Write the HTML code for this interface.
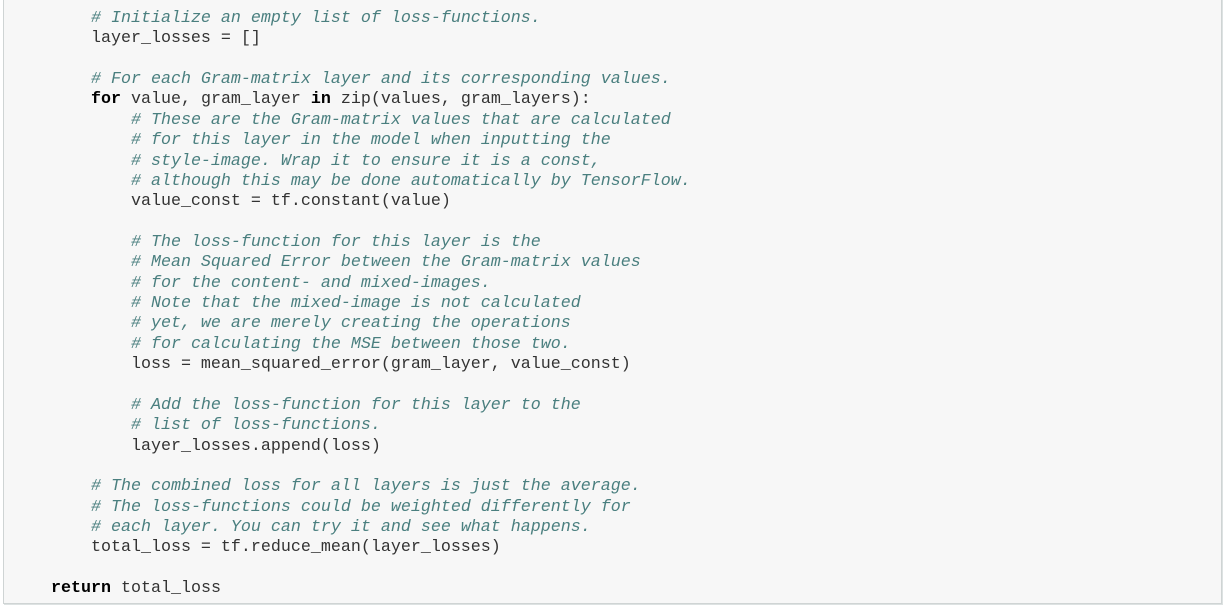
<!DOCTYPE html>
<html><head><meta charset="utf-8"><style>
html,body{margin:0;padding:0;background:#fff;width:1226px;height:611px;overflow:hidden}
.box{position:absolute;left:3px;top:-2px;width:1217px;height:605px;background:#f7f7f7;border:1px solid #cfd4d4;border-top:none;box-shadow:1px 1px 0 #dde2e2}
pre{position:absolute;left:51px;top:9px;margin:0;font-family:"Liberation Mono",monospace;font-size:16.67px;line-height:20.36px;color:#333}
.c{color:#4a7f7f;font-style:italic}
.k{color:#000;font-weight:bold}
</style></head><body>
<div class="box"></div>
<pre>    <span class="c"># Initialize an empty list of loss-functions.</span>
    layer_losses = []

    <span class="c"># For each Gram-matrix layer and its corresponding values.</span>
    <span class="k">for</span> value, gram_layer <span class="k">in</span> zip(values, gram_layers):
        <span class="c"># These are the Gram-matrix values that are calculated</span>
        <span class="c"># for this layer in the model when inputting the</span>
        <span class="c"># style-image. Wrap it to ensure it is a const,</span>
        <span class="c"># although this may be done automatically by TensorFlow.</span>
        value_const = tf.constant(value)

        <span class="c"># The loss-function for this layer is the</span>
        <span class="c"># Mean Squared Error between the Gram-matrix values</span>
        <span class="c"># for the content- and mixed-images.</span>
        <span class="c"># Note that the mixed-image is not calculated</span>
        <span class="c"># yet, we are merely creating the operations</span>
        <span class="c"># for calculating the MSE between those two.</span>
        loss = mean_squared_error(gram_layer, value_const)

        <span class="c"># Add the loss-function for this layer to the</span>
        <span class="c"># list of loss-functions.</span>
        layer_losses.append(loss)

    <span class="c"># The combined loss for all layers is just the average.</span>
    <span class="c"># The loss-functions could be weighted differently for</span>
    <span class="c"># each layer. You can try it and see what happens.</span>
    total_loss = tf.reduce_mean(layer_losses)

<span class="k">return</span> total_loss</pre>
</body></html>
